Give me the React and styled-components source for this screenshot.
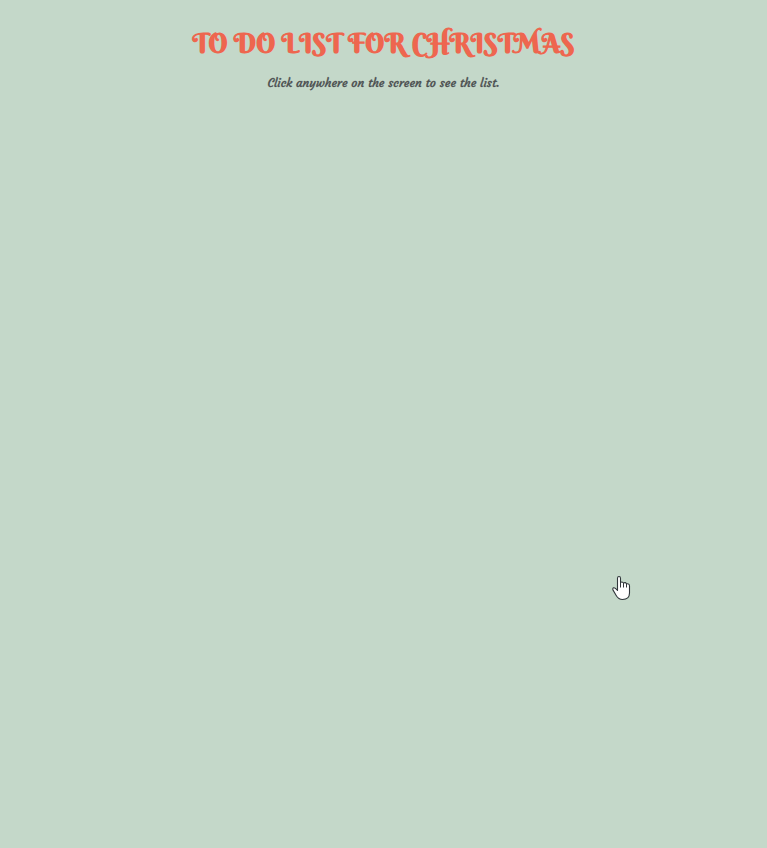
import React from "react";
import styled, { createGlobalStyle } from "styled-components";

const GlobalStyle = createGlobalStyle`
  body {
    margin: 0;
    background: #c4d8c9;
  }
`;

const Page = styled.main`
  position: relative;
  min-height: 100vh;
  box-sizing: border-box;
  padding-top: 26px;
  display: flex;
  flex-direction: column;
  align-items: center;
  background: #c4d8c9;
  cursor: pointer;
  overflow: hidden;
`;

const Title = styled.h1`
  margin: 0;
  height: 36px;
  color: #ee664f;
  font: 700 27px/36px "Berkshire Swash", "Liberation Serif", serif;
  white-space: nowrap;
`;

const Hint = styled.p`
  margin: 12px 0 0;
  height: 18px;
  color: #4b4f50;
  font: 400 12px/18px Courgette, Lato, sans-serif;
  -webkit-text-stroke: 0.3px #4b4f50;
  white-space: nowrap;
`;

const Pointer = styled.svg`
  position: absolute;
  left: 612px;
  top: 575px;
  width: 19px;
  height: 26px;
`;

export default function App() {
  return (
    <>
      <GlobalStyle />
      <Page>
        <Title>TO DO LIST FOR CHRISTMAS</Title>
        <Hint>Click anywhere on the screen to see the list.</Hint>
        <Pointer viewBox="0 0 19 26" aria-hidden="true">
          <path
            d="M5.5 15.5V3.2Q5.5 1.5 7 1.5T8.5 3.2V7.5Q10 6.2 11.5 8Q13.5 6.9 14.5 8.8Q17.5 8.4 17.5 11V18Q17.5 24.5 10.5 24.5Q6.5 24.5 4.2 20.5L1.2 15.4Q.2 13.5 1.6 12.8Q3 12.2 5.5 15.5Z"
            fill="#fff"
            stroke="#30363a"
            strokeWidth="1.1"
            strokeLinejoin="round"
          />
          <path d="M8.5 7.5V12.5M11.5 8V12.5M14.5 8.8V12.5" fill="none" stroke="#30363a" />
        </Pointer>
      </Page>
    </>
  );
}
